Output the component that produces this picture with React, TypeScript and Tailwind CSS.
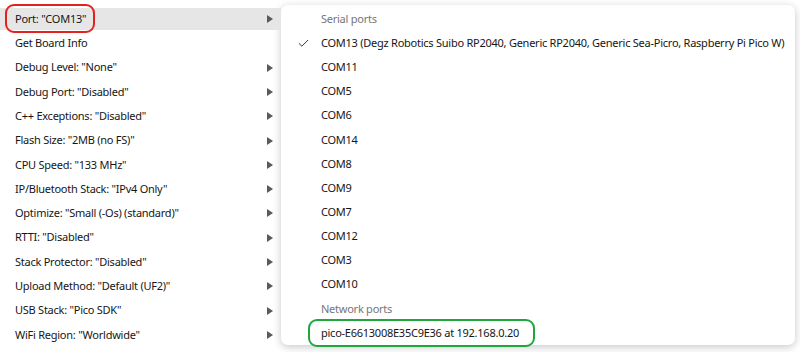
import { Check } from 'lucide-react';

const boardItems = [
  { label: 'Port: "COM13"', arrow: true, active: true },
  { label: 'Get Board Info', arrow: false },
  { label: 'Debug Level: "None"', arrow: true },
  { label: 'Debug Port: "Disabled"', arrow: true },
  { label: 'C++ Exceptions: "Disabled"', arrow: true },
  { label: 'Flash Size: "2MB (no FS)"', arrow: true },
  { label: 'CPU Speed: "133 MHz"', arrow: true },
  { label: 'IP/Bluetooth Stack: "IPv4 Only"', arrow: true },
  { label: 'Optimize: "Small (-Os) (standard)"', arrow: true },
  { label: 'RTTI: "Disabled"', arrow: true },
  { label: 'Stack Protector: "Disabled"', arrow: true },
  { label: 'Upload Method: "Default (UF2)"', arrow: true },
  { label: 'USB Stack: "Pico SDK"', arrow: true },
  { label: 'WiFi Region: "Worldwide"', arrow: true },
];

const serialPorts = ['COM11', 'COM5', 'COM6', 'COM14', 'COM8', 'COM9', 'COM7', 'COM12', 'COM3', 'COM10'];

function Arrow() {
  return (
    <svg width="6" height="8" viewBox="0 0 6 8" className="text-[#5a5a5a]">
      <path d="M0 0 L6 4 L0 8 Z" fill="currentColor" />
    </svg>
  );
}

export default function App() {
  return (
    <div
      className="relative w-[800px] h-[352px] overflow-hidden bg-white flex text-[11px] tracking-[-0.25px] text-[#161616]"
      style={{ fontFamily: '"Noto Sans", "Open Sans", sans-serif' }}
    >
      {/* main tools menu */}
      <div className="w-[281px] shrink-0 pt-[7px] flex flex-col">
        {boardItems.map((item) => (
          <div
            key={item.label}
            className={`relative h-[22px] my-[1.15px] flex items-center justify-between pl-[15px] pr-[8px] ${
              item.active ? 'bg-[#e6e6e6]' : ''
            }`}
          >
            <span className="whitespace-nowrap">{item.label}</span>
            {item.arrow && <Arrow />}
            {item.active && (
              <div className="absolute left-[5px] top-[-4px] w-[90px] h-[29px] rounded-[9px] border-[2.5px] border-[#e3211f]" />
            )}
          </div>
        ))}
      </div>

      {/* port submenu */}
      <div className="mt-[5px] w-[514px] h-[340px] shrink-0 bg-white rounded-[7px] shadow-[0_2px_8px_rgba(0,0,0,0.22)] pt-[2px] flex flex-col">
        <div className="h-[22px] my-[1.15px] flex items-center pl-[40px] text-[#767676]">Serial ports</div>
        <div className="h-[22px] my-[1.15px] flex items-center">
          <div className="w-[40px] shrink-0 flex justify-center pl-[4px]">
            <Check className="w-[13px] h-[13px] text-[#333]" strokeWidth={1.8} />
          </div>
          <span className="whitespace-nowrap">
            COM13 (Degz Robotics Suibo RP2040, Generic RP2040, Generic Sea-Picro, Raspberry Pi Pico W)
          </span>
        </div>
        {serialPorts.map((p) => (
          <div key={p} className="h-[22px] my-[1.15px] flex items-center pl-[40px]">
            {p}
          </div>
        ))}
        <div className="h-[22px] my-[1.15px] flex items-center pl-[40px] text-[#767676]">Network ports</div>
        <div className="relative h-[22px] my-[1.15px] flex items-center pl-[40px]">
          <span className="whitespace-nowrap">pico-E6613008E35C9E36 at 192.168.0.20</span>
          <div className="absolute left-[27px] top-[-3px] w-[227px] h-[28px] rounded-[9px] border-[2.5px] border-[#1ea83c]" />
        </div>
      </div>
    </div>
  );
}
